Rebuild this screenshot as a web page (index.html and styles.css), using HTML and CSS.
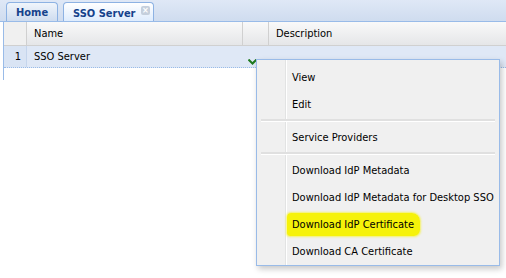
FILE: index.html
```html
<!DOCTYPE html>
<html lang="en">

<head>
    <meta charset="UTF-8">
    <title>SSO Server</title>
    <link rel="stylesheet" href="styles.css">
</head>

<body>
    <div class="tabbar">
        <div class="tab">Home</div>
        <div class="tab active">SSO Server <span class="tab-close">&#215;</span></div>
    </div>

    <div class="grid">
        <div class="grid-head">
            <div class="cell num"></div>
            <div class="cell name">Name</div>
            <div class="cell act"></div>
            <div class="cell desc">Description</div>
        </div>
        <div class="grid-row">
            <div class="cell num">1</div>
            <div class="cell name">SSO Server</div>
            <div class="cell act">
                <svg class="chev" width="9" height="6" viewBox="0 0 9 6">
                    <path d="M0.5 0.5 L4.5 4.5 L8.5 0.5" fill="none" stroke="#1f7a1f" stroke-width="2"/>
                </svg>
            </div>
            <div class="cell desc"></div>
        </div>
    </div>

    <!-- context menu -->
    <div class="menu">
        <div class="menu-item">View</div>
        <div class="menu-item">Edit</div>
        <div class="menu-sep"></div>
        <div class="menu-item">Service Providers</div>
        <div class="menu-sep"></div>
        <div class="menu-item">Download IdP Metadata</div>
        <div class="menu-item">Download IdP Metadata for Desktop SSO</div>
        <div class="menu-item"><span class="marker">Download IdP Certificate</span></div>
        <div class="menu-item">Download CA Certificate</div>
    </div>
</body>

</html>
```

FILE: styles.css
```css
body {
    margin: 0;
    font-family: "DejaVu Sans Condensed", "Liberation Sans", sans-serif;
    font-size: 11px;
    color: #000;
    background: #fff;
}

.tabbar {
    height: 22px;
    box-sizing: border-box;
    display: flex;
    align-items: flex-end;
    gap: 5px;
    padding-left: 6px;
    background: linear-gradient(#dfe8f6, #cfdcef);
    border-bottom: 1px solid #99bbe8;
}

.tab {
    height: 19px;
    box-sizing: border-box;
    padding: 3px 9px 0;
    border: 1px solid #8db2e3;
    border-bottom: none;
    border-radius: 4px 4px 0 0;
    background: linear-gradient(#f0f5fb, #cedcef);
    color: #15428b;
    font-weight: bold;
    font-size: 11px;
}

.tab.active {
    background: linear-gradient(#ffffff, #deecfd);
    padding: 3px 3px 0 9px;
}

.tab-close {
    display: inline-block;
    width: 9px;
    height: 9px;
    line-height: 8px;
    font-size: 9px;
    text-align: center;
    color: #fff;
    background: #c5cfdc;
    border-radius: 2px;
    vertical-align: 4px;
    margin-left: 2px;
}

.grid {
    margin-left: 3px;
    border-left: 1px solid #99bbe8;
    height: 58px;
}

.grid-head,
.grid-row {
    display: flex;
}

.grid-head {
    height: 24px;
    box-sizing: border-box;
    background: linear-gradient(#f9f9f9, #e5e6e8);
    border-bottom: 1px solid #d0d0d0;
}

.grid-row {
    height: 22px;
    box-sizing: border-box;
    background: #dfe8f6;
    border-bottom: 1px dotted #99bbe8;
}

.cell {
    display: flex;
    align-items: center;
    padding-left: 7px;
    box-sizing: border-box;
}

.grid-head .cell {
    border-right: 1px solid #d0d0d0;
}

.grid-head .desc {
    border-right: none;
}

.num {
    width: 23px;
    padding: 0 5px 0 0;
    justify-content: flex-end;
}

.grid-head .num {
    background: #f0f0f0;
}

.grid-row .num {
    background: #d9e4f4;
    border-right: 1px solid #c5d5ec;
}

.name {
    width: 216px;
}

.act {
    width: 26px;
    padding: 0;
}

.chev {
    margin: 10px 0 0 5px;
}

.desc {
    flex: 1;
}

.menu {
    position: absolute;
    left: 256px;
    top: 59px;
    width: 244px;
    box-sizing: border-box;
    padding: 4px 2px 0;
    background: linear-gradient(90deg, #f0f0f0 28px, #e2e3e3 28px, #e2e3e3 29px, #ffffff 29px, #ffffff 30px, #f0f0f0 30px);
    border: 1px solid #99bbe8;
    box-shadow: 2px 3px 6px rgba(0, 0, 0, 0.22);
}

.menu-item {
    height: 27px;
    line-height: 27px;
    padding-left: 33px;
    white-space: nowrap;
}

.menu-sep {
    height: 2px;
    margin: 1px 2px 2px;
    background: #e0e0e0;
    border-bottom: 1px solid #fff;
}

.marker {
    background: #f6f20a;
    padding: 5px 6px 5px 5px;
    margin-left: -5px;
    border-radius: 4px 8px 6px 3px;
    box-shadow: 0 0 2px 1px rgba(246, 242, 10, 0.6);
}
```
